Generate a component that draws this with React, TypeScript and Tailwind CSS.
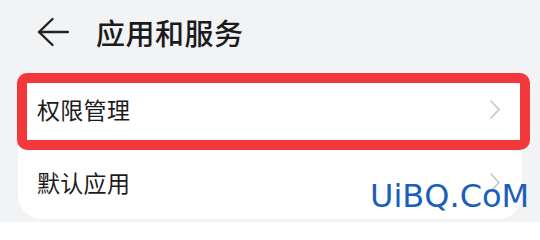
import React from 'react';

const rows = ['权限管理', '默认应用'];

const Chevron = () => (
  <svg width="10" height="19" viewBox="0 0 10 19" fill="none" className="shrink-0">
    <path d="M1 1 L9 9.5 L1 18" stroke="#c4c4c6" strokeWidth="1.6" strokeLinecap="round" strokeLinejoin="round" />
  </svg>
);

export default function App() {
  return (
    <div
      className="relative w-[540px] h-[222px] overflow-hidden bg-[#f1f3f5] text-[#1b1b1b]"
      style={{ fontFamily: '"Noto Sans CJK SC", "Noto Sans", sans-serif' }}
    >
      <div className="flex items-center h-[73px] pb-[9px] pl-[37px]">
        <svg width="32" height="30" viewBox="0 0 32 30" fill="none">
          <path d="M2 15 H31 M15.5 2 L2 15 L15.5 28" stroke="#222" strokeWidth="2.4" strokeLinecap="round" strokeLinejoin="round" />
        </svg>
        <span className="ml-[27px] text-[29px] leading-none font-medium tracking-[0.5px]">应用和服务</span>
      </div>

      <div className="mx-[18px] rounded-[24px] bg-white">
        {rows.map((label) => (
          <div key={label} className="flex items-center justify-between h-[73px] pl-[19px] pr-[22px]">
            <span className="text-[23px] leading-none tracking-[0.3px]">{label}</span>
            <Chevron />
          </div>
        ))}
      </div>

      {/* annotation box */}
      <div className="absolute left-[17px] top-[73px] w-[513px] h-[77px] rounded-[10px] border-[10px] border-[#f3383c]" />

      {/* watermark */}
      <div
        className="absolute left-[370px] top-[180px] text-[32px] leading-none text-[#1b5fbb]"
        style={{ fontFamily: '"DejaVu Sans", sans-serif' }}
      >
        UiBQ.CoM
      </div>
    </div>
  );
}
